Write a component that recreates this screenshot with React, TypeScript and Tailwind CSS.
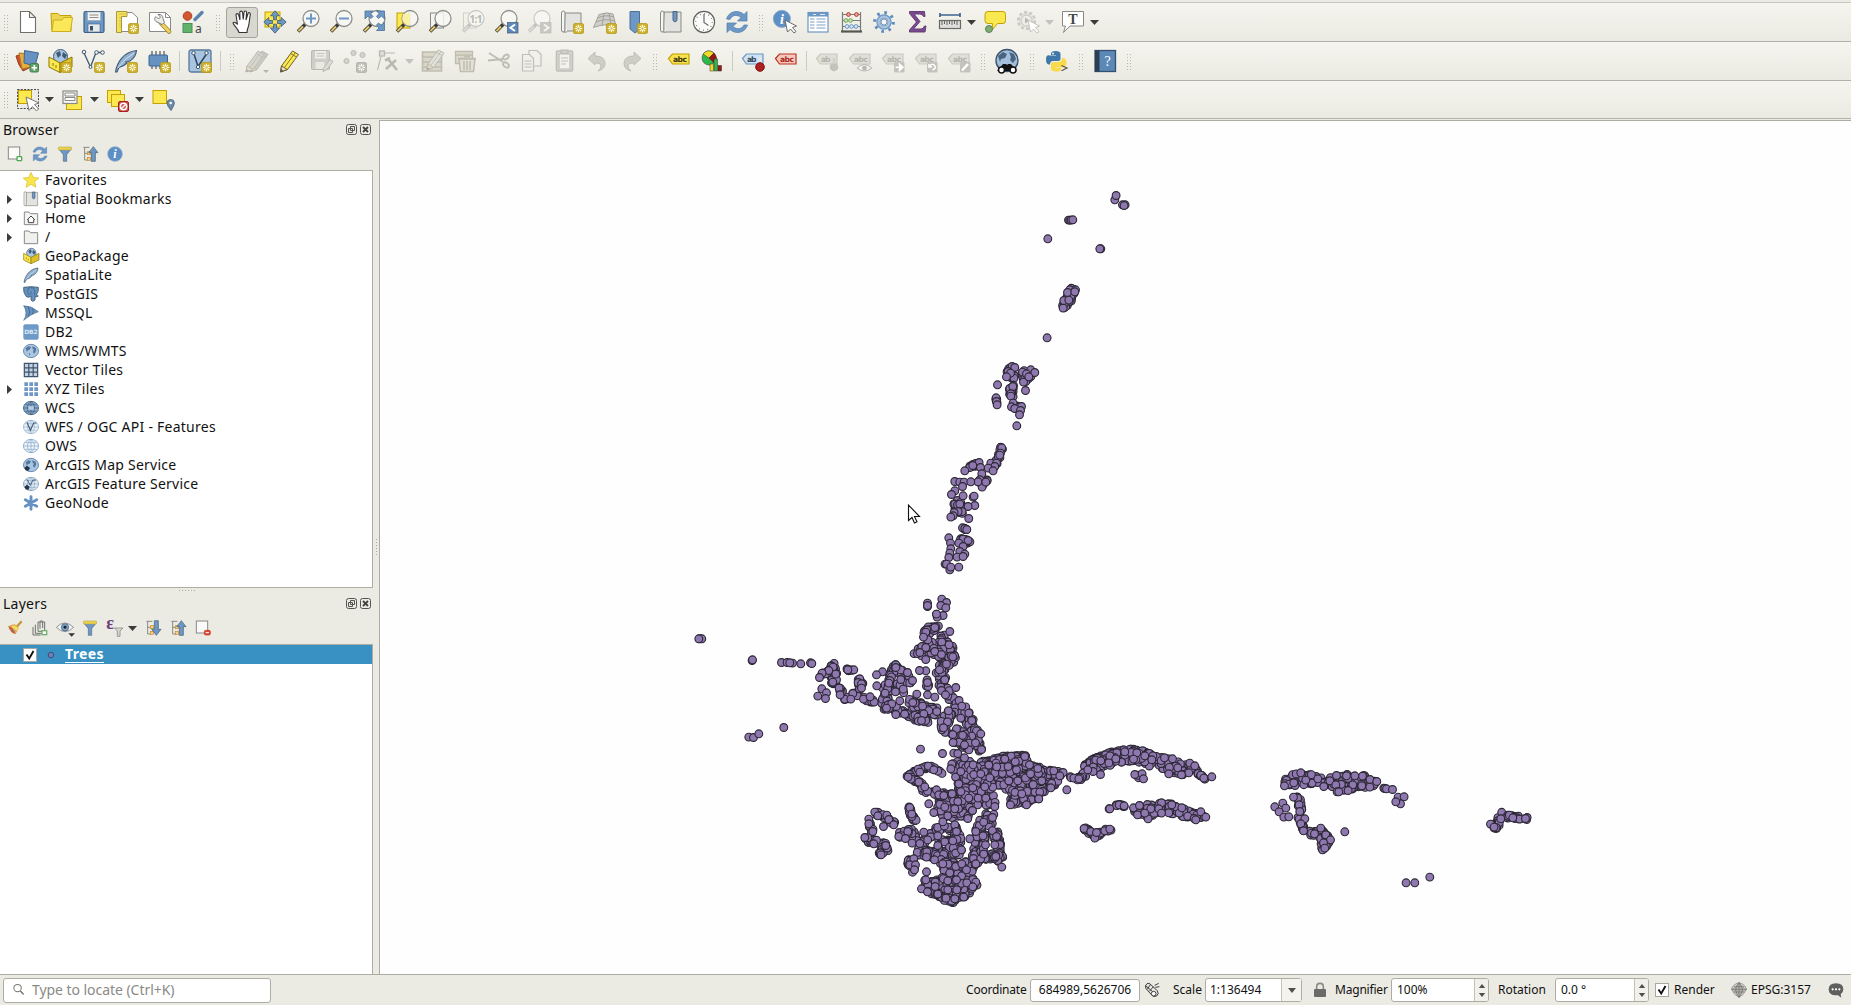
import React from "react";

/* ---------- shared icon parts (24 x 24 grid) ---------- */
const B = "#6d97c4";
const D = "#415a75";
const Y = "#fce94f";
const YS = "#c4a000";
const G = "#888a85";

const Star = ({ x = 13, y = 13, grey = false }: { x?: number; y?: number; grey?: boolean }) => (
  <g transform={`translate(${x} ${y})`}>
    <rect x=".5" y=".5" width="10" height="10" rx="1.5" fill={grey ? "#bdbdb7" : "#cdb02a"} stroke={grey ? "#b0b0aa" : "#b89b1e"} strokeWidth=".8" />
    <path d="M5.5 1.8v7.4M1.8 5.5h7.4M2.9 2.9l5.2 5.2M8.1 2.9L2.9 8.1" stroke="#fffdf0" strokeWidth="1.2" />
    <circle cx="5.5" cy="5.5" r="1.3" fill={grey ? "#bdbdb7" : "#d9c04a"} />
  </g>
);
const Mag = ({ grey = false }: { grey?: boolean }) => (
  <g>
    <path d="M9.5 14L2 21.5" stroke={grey ? "#c4c3bc" : "#3a3a38"} strokeWidth="3.6" />
    <path d="M7 16.5L2.4 21.1" stroke={grey ? "#dddcd4" : "#e8c865"} strokeWidth="2" />
    <circle cx="15" cy="8.5" r="8" fill="#f7f7f4" fillOpacity=".85" stroke={grey ? "#cbcac3" : "#8d8f8b"} strokeWidth="1.3" />
  </g>
);
const Globe = ({ fill = "#a9c6e2", line = D, land = false }: { fill?: string; line?: string; land?: boolean }) => (
  <g>
    <ellipse cx="12" cy="12" rx="11.3" ry="10" fill={fill} stroke={line} strokeWidth="1.2" />
    {land ? (
      <path d="M4 8l4-3 4 1-2 4-3 1-1 3zM14 5l5 2 1 4-3 5-2-2 1-4-2-2zM8.5 15l2.5 1-1 3.500z" fill={line} />
    ) : (
      <path d="M1 12h22M3.500 7h17M3.500 17h17M12 2v20M12 2c-7 5-7 15 0 20M12 2c7 5 7 15 0 20" fill="none" stroke={line} strokeWidth=".9" />
    )}
  </g>
);
const Feather = () => (
  <g>
    <path d="M1.500 23C3 14 9 3 22.500 1.500 22 7 19 10 16 12l-4 1 1 1c-3 3-6 4-8 4.500L3 23z" fill="#8fb0d0" stroke={D} strokeWidth="1.100" />
    <path d="M4 19Q9 11 20 4" fill="none" stroke="#dbe7f2" strokeWidth=".9" />
  </g>
);
const GeoBox = () => (
  <g>
    <circle cx="12.500" cy="7.500" r="7" fill="#a9c6e2" stroke={D} />
    <path d="M8 4l4-2 1 4-3 3zM15 3l4 3-2 4-3-3z" fill={D} />
    <path d="M1 8l11 6v9.500L1 18z" fill="#fce94f" stroke="#8c7400" />
    <path d="M24 8l-12 6v9.500L24 18z" fill="#dcc02c" stroke="#8c7400" />
    <path d="M5 14v3M8 16v3" stroke="#8c7400" />
  </g>
);
const Tag = ({ fill, stroke, text, label = "abc" }: { fill: string; stroke: string; text: string; label?: string }) => (
  <g>
    <path d="M1.500 9.500L5.500 5h16.500v10H5.500z" fill={fill} stroke={stroke} strokeWidth="1.200" />
    <text x="6" y="12.800" fontSize="7.600" fontWeight="700" fill={text} className="font-['DejaVu_Sans']" textLength={label.length > 2 ? 14 : 9.500}>{label}</text>
  </g>
);
const Refresh = () => (
  <g fill={B} stroke="#4d7fb0" strokeWidth=".7">
    <path d="M1.500 9C4 .5 14-.5 19 4.500l3-3v9.500h-9.500L16 7.500C12 4 7 5 5 9.500z" />
    <path d="M22.500 15C20 23.500 10 24.500 5 19.500l-3 3V13h9.500L8 16.500C12 20 17 19 19 15z" />
  </g>
);
const Cursor = ({ grey = false }: { grey?: boolean }) => (
  <path d="M12 10l2.500 12 3-3 3.500 4 2-1.500-3.500-4 4-1.500z" fill="#fff" stroke={grey ? "#c4c3bc" : "#6a6a6a"} strokeWidth="1" />
);
const Funnel = () => (
  <g>
    <path d="M3 5h18l-6.500 8v10h-5V13z" fill={B} stroke={D} strokeWidth=".8" />
    <rect x="2" y="1.500" width="20" height="4.500" rx="1.500" fill="#e9d34e" stroke="#b5a03a" strokeWidth=".8" />
  </g>
);
const TreeArrow = ({ up = false }: { up?: boolean }) => (
  <g>
    <path d="M2 2h9M4 2v19h5M4 11h5" fill="none" stroke={G} strokeWidth="1.500" />
    <rect x="8" y="8.500" width="4.500" height="4.500" fill="#f6d08a" stroke="#c98a1e" />
    <rect x="8" y="17" width="4.500" height="4.500" fill="#f6d08a" stroke="#c98a1e" />
    <path d={up ? "M17 1l7 9h-4v13h-6V10h-4z" : "M17 23l7-9h-4V1h-6v13h-4z"} fill={B} stroke={D} />
  </g>
);
const Info = () => (
  <g>
    <circle cx="12" cy="12" r="11" fill="#5d8fc4" stroke="#88a9cb" />
    <text x="12" y="18.500" fontSize="18" fontStyle="italic" fontWeight="700" fill="#fff" textAnchor="middle" className="font-['Liberation_Serif']">i</text>
  </g>
);
const ZF = "#d0cfc7";
const Pencil = ({ c = Y, s = "#6a6030", t = "#555" }: { c?: string; s?: string; t?: string }) => (
  <g>
    <path d="M3 17L14 2l6 3.500L9 20.500 2 23z" fill={c} stroke={s} strokeWidth="1" />
    <path d="M2 23l1-6 6 3.500z" fill="#e9dcc0" stroke={s} />
    <path d="M2 23l.5-3 2.500 2z" fill={t} />
    <path d="M12 4.500l6 3.500M6 18.500L16.500 4" stroke={s} strokeWidth=".8" />
  </g>
);

const icons: Record<string, React.ReactNode> = {
  file: <path d="M4.500 1.500h9l6 6v15h-15zM13.500 1.500v6h6" fill="#fff" stroke="#6e6e6c" strokeWidth="1.100" />,
  open: (
    <g>
      <path d="M2 3.500h7l2 2h11v16H3z" fill="#ecd551" stroke={YS} />
      <path d="M3 21.500L4.500 10H13l1.500-2.500h9L21.500 21.500z" fill="#fae75a" stroke="#cfae1c" />
    </g>
  ),
  save: (
    <g>
      <rect x="2" y="1.500" width="20" height="21" rx="1.500" fill={B} stroke="#3f5f86" strokeWidth="1.200" />
      <rect x="5.500" y="2" width="13" height="8.500" fill="#f4f4f0" stroke="#9aa7b5" strokeWidth=".6" />
      <path d="M7.500 5h9M7.500 7.500h9" stroke="#8c8c8a" />
      <rect x="6" y="14" width="12" height="8" fill="#e8eaea" stroke="#3f5f86" strokeWidth=".6" />
      <rect x="8" y="16" width="3" height="4.500" fill="#36506f" />
    </g>
  ),
  newLayout: (
    <g>
      <path d="M5 2.500h12l5.500 5v14H5z" fill="#fff" stroke={G} />
      <path d="M1.500 1.500H12v5H6.500v16h-5z" fill="#f5e05a" stroke="#a89a3c" />
      <path d="M4 4h7M4 8h2M4 11h2M4 14h2M4 17h2" stroke="#c4b04a" strokeWidth=".7" />
      <Star />
    </g>
  ),
  layouts: (
    <g>
      <path d="M1.500 2.500h16l5 5v14h-21z" fill="#fff" stroke={G} />
      <path d="M17.500 2.500v5h5" fill="none" stroke={G} />
      <path d="M13 13l8 8.500" stroke="#9c8438" strokeWidth="4.600" strokeLinecap="round" />
      <path d="M14 14l7 7.500" stroke="#f0d25c" strokeWidth="3" strokeLinecap="round" />
      <path d="M14 14.500L8 11.500c-2-2-1.500-4 0-5l2.500 2.500 2-2L10 4.500c3-.5 5 1 5 4l1.500 4z" fill="#ececea" stroke="#7d7f7b" />
    </g>
  ),
  style: (
    <g>
      <circle cx="6.500" cy="6" r="4.300" fill="#d4552f" stroke="#a8411f" />
      <path d="M14 9.500l7-7" stroke="#5b83b0" strokeWidth="3.400" strokeLinecap="round" />
      <rect x="2" y="13.500" width="9" height="9" fill="#5fb36b" stroke="#4d8f57" />
      <text x="14" y="22.500" fontSize="12" fill="#454545" className="font-['Noto_Sans']">a</text>
    </g>
  ),
  hand: (
    <path
      d="M7.500 22.500c-1-4-5-6.500-6-9.500 1-1.500 3-.5 4.500 1.500L4.500 5c0-1.800 2.300-1.800 2.700 0l1.300 5L8.300 2.500c0-1.800 2.600-1.800 2.800 0l.6 7 .9-7.500c.3-1.500 2.600-1.300 2.500.5L14.500 10l2-6.500c.5-1.500 2.500-.8 2.300.8-.8 4-.8 9-2 12.500-.8 2-1.300 3.500-1.300 5.700z"
      fill="#fff" stroke="#333" strokeWidth="1.100" transform="translate(1.500 0)"
    />
  ),
  panSel: (
    <g>
      <rect x="2" y="2" width="15" height="15" fill={Y} stroke={YS} />
      <path d="M12 .8l4.500 5h-3v4h-3v-4h-3zM12 23.200l4.500-5h-3v-4h-3v4h-3zM.8 12l5-4.500v3h3.700v3H5.800v3zM23.200 12l-5-4.500v3h-3.700v3h3.700v3z" fill={B} stroke={D} strokeWidth=".8" />
    </g>
  ),
  zoomIn: <g><Mag /><path d="M15 3.500v10M10 8.500h10" stroke={B} strokeWidth="2" /></g>,
  zoomOut: <g><Mag /><path d="M10 8.500h10" stroke={B} strokeWidth="2" /></g>,
  zoomFull: (
    <g>
      <Mag />
      <path d="M3 1h8L8.500 3.500l2.500 3-2 2-3-2.500L3 9zM22.500 1h-8L17 3.500l-2.500 3 2 2 3-2.500 3 3zM22.500 20.500h-8L17 18l-2.500-3 2-2 3 2.500 3-3z" fill={B} stroke="#4a709a" strokeWidth=".8" />
    </g>
  ),
  zoomSel: <g><rect x="2" y="3" width="13" height="15" fill={Y} stroke={YS} /><Mag /><path d="M8 4h7v11h-3q-4-2-5-6z" fill="#f8ef9c" opacity=".9" /></g>,
  zoomLayer: <g><rect x="2.500" y="3" width="13" height="15" fill="#f4f3ee" stroke={G} /><Mag /></g>,
  zoomNative: (
    <g>
      <rect x="2.500" y="3" width="13" height="15" fill="none" stroke={ZF} /><Mag grey />
      <text x="8.500" y="12.500" fontSize="10" fontWeight="700" fill="#b9b8b0" className="font-['Noto_Sans']" textLength="13">1:1</text>
    </g>
  ),
  zoomLast: <g><Mag /><rect x="13.500" y="12.500" width="10.500" height="10.500" fill="#5d89b8" stroke={D} strokeWidth=".7" /><path d="M21 14.500l-4.500 3.300L21 21" fill="none" stroke="#fff" strokeWidth="1.900" /></g>,
  zoomNext: <g><Mag grey /><rect x="13.500" y="12.500" width="10.500" height="10.500" fill="#c9c8c1" stroke="#bdbcb5" strokeWidth=".7" /><path d="M17 14.500l4.500 3.300L17 21" fill="none" stroke="#f5f4ee" strokeWidth="1.900" /></g>,
  newMap: (
    <g>
      <path d="M5 3h16v18H5z" fill="#e2e2df" stroke={G} />
      <path d="M5 3q0-2-1.700-2T1.500 3v17q0 2 1.800 2H7M5 3v17q0 2-1.700 2" fill="#f6f6f4" stroke={G} />
      <Star />
    </g>
  ),
  new3d: (
    <g>
      <path d="M6 4.500q8-3 14-.5l3 12q-11-3-22.500 1.500z" fill="#d0cfc9" stroke="#a3a29b" />
      <path d="M3 12q9-4 19-1M5 8q8-4 16-1M11 3.500L9 15.500M16 3l2 12" fill="none" stroke="#a3a29b" />
      <Star x={13} y={13} />
    </g>
  ),
  newBookmark: <g><path d="M4 1.500h9.500v18L9 23 4 19z" fill={B} stroke="#4b6f98" /><g transform="translate(-2)"><Star /></g></g>,
  bookmarks: (
    <g>
      <path d="M5 2h17v20H5z" fill="#e2e2df" stroke={G} />
      <path d="M5 3q0-2-1.700-2T1.500 3v17q0 2 1.800 2H7M5 3v17q0 2-1.700 2" fill="#f6f6f4" stroke={G} />
      <path d="M14 1.500h4v9l-2 1.500-2-1.500z" fill={B} stroke={D} strokeWidth=".9" />
    </g>
  ),
  clock: (
    <g>
      <circle cx="12" cy="12" r="10.600" fill="#fbfbfa" stroke="#5e605e" strokeWidth="1.100" />
      <circle cx="12" cy="12" r="8.300" fill="none" stroke="#777" strokeWidth="1.400" strokeDasharray=".8 3.546" />
      <path d="M12 4v8.500l4.500 3" fill="none" stroke="#6a6a68" strokeWidth="1.200" />
    </g>
  ),
  refresh: <Refresh />,
  identify: (
    <g>
      <g transform="translate(-.5 -.5) scale(.78)"><Info /></g>
      <Cursor />
    </g>
  ),
  table: (
    <g>
      <rect x="2" y="2.500" width="20" height="19.500" fill="#fff" stroke={B} strokeWidth="1.200" />
      <rect x="2" y="2.500" width="20" height="4" fill={B} />
      <path d="M7 4.500h3M14 4.500h5" stroke="#dce8f4" />
      <path d="M4 9h4.500M10.500 9h9M4 12h4.500M10.500 12h9M4 15h4.500M10.500 15h9M4 18h4.500M10.500 18h9" stroke="#7d9ec2" />
    </g>
  ),
  abacus: (
    <g>
      <path d="M3.500 2v19M21.500 2v19M3.500 4.500h18M3.500 10.500h18M3.500 16.500h18" stroke="#7a7a78" strokeWidth="1.200" fill="none" />
      <path d="M2 21.500h21" stroke="#555753" strokeWidth="2.200" />
      <g strokeWidth="1"><g fill="#e9a0a0" stroke="#c0392b"><circle cx="9.500" cy="4.500" r="1.900" /><circle cx="17.500" cy="4.500" r="1.900" /></g>
        <g fill="#bfe3a8" stroke="#7da766"><circle cx="7" cy="10.500" r="1.900" /><circle cx="11.500" cy="10.500" r="1.900" /></g>
        <g fill="#d5e6f5" stroke="#6d97c4"><circle cx="8" cy="16.500" r="1.900" /><circle cx="12.500" cy="16.500" r="1.900" /><circle cx="17" cy="16.500" r="1.900" /></g></g>
    </g>
  ),
  gear: (
    <g fill="none" stroke={B}>
      <circle cx="12" cy="12" r="9.300" strokeWidth="3.200" strokeDasharray="2.600 4.704" stroke="#5f8cbd" />
      <circle cx="12" cy="12" r="5.600" strokeWidth="4.200" />
      <circle cx="12" cy="12" r="5.400" strokeWidth="2.200" stroke="#a9c4e0" />
      <circle cx="12" cy="12" r="3" strokeWidth=".8" stroke="#5580ad" fill="#f5f4ee" />
    </g>
  ),
  sigma: <path d="M4.500 1.500h15l.5 5h-1.500Q17.500 4 15 4h-6l6 7.500L8.500 19H16q2.500 0 3.500-3H21l-1 6H4.500v-2l7-8-7-8.500z" fill="#7a4a94" stroke="#5c3566" strokeWidth=".9" />,
  measure: (
    <g>
      <path d="M2 5h20M2 3v4M22 3v4" stroke="#3f6492" strokeWidth="1.700" />
      <rect x="1.500" y="10.500" width="21" height="8" fill="#dedfdc" stroke="#686a67" strokeWidth="1.200" />
      <path d="M4 11v4M6.500 11v3M9 11v4M11.500 11v3M14 11v4M16.500 11v3M19 11v4" stroke="#555" strokeWidth=".9" />
    </g>
  ),
  tip: (
    <g>
      <path d="M5 1.500h15q2.500 0 2.500 3v6q0 3-2.500 3h-5.500L9 20l.5-6.500H5q-3 0-3-3v-6q0-3 3-3z" fill="#f9e84f" stroke={YS} />
      <circle cx="6" cy="19" r="3.500" fill="#7fae74" stroke="#5b8253" />
    </g>
  ),
  action: (
    <g>
      <circle cx="10.500" cy="10.500" r="8.300" fill="#e6e5de" stroke="#cbcac2" strokeWidth="2.600" strokeDasharray="3 2.200" />
      <circle cx="10.500" cy="10.500" r="5.500" fill="#eeede7" stroke="#c3c2ba" /><path d="M9 7.500l4.500 3-4.500 3z" fill="#b9b8b0" />
      <Cursor grey />
    </g>
  ),
  textNote: (
    <g>
      <path d="M1.500 1.500h21v14.500H9L2.500 22.500 4.500 16h-3z" fill="#fff" stroke={G} />
      <text x="12" y="13.500" fontSize="14" fontWeight="700" fill="#444" textAnchor="middle" className="font-['Liberation_Serif']">T</text>
    </g>
  ),
  /* second row */
  source: (
    <g>
      <path d="M1 7l9-3 6 14-8 4q-5-6-7-15z" fill="#c9512f" stroke="#9d3c20" />
      <path d="M4 4l11 1 1 13-9 2z" fill="#e8ab3c" stroke="#b17b1c" />
      <path d="M9.500 1.500L23.500 4 20 17l-11-3z" fill="#6592c0" stroke="#3f6492" />
      <rect x="15" y="14.500" width="8.500" height="8.500" rx="1.500" fill="#5fa368" stroke="#477a4f" /><path d="M19.300 16v5.500M16.500 18.800H22" stroke="#fff" strokeWidth="1.600" />
    </g>
  ),
  geopkg: <g><GeoBox /><Star /></g>,
  vshape: (
    <g>
      <path d="M3 4l6.500 14L15 3.500h6" fill="none" stroke={D} strokeWidth="1.300" />
      <g fill="#f5f4ee" stroke={D} strokeWidth="1"><circle cx="3" cy="3" r="1.800" /><circle cx="15.500" cy="3.500" r="1.800" /><circle cx="21.500" cy="3.500" r="1.800" /><circle cx="9.500" cy="18" r="1.500" /></g>
      <Star />
    </g>
  ),
  feather: <g><Feather /><Star /></g>,
  memory: (
    <g>
      <path d="M5 2v18M9 2v18M13 2v18M17 2v18" stroke="#555753" strokeWidth="1.200" />
      <rect x="2" y="6" width="18.500" height="11" rx="1" fill="#6592c0" stroke="#3f6492" />
      <Star />
    </g>
  ),
  virtual: (
    <g>
      <rect x="1" y="1" width="22" height="22" rx="2" fill="#a8c4df" stroke="#57789c" strokeWidth="1.300" />
      <path d="M6 5l4 12.500L18.500 5" fill="none" stroke="#2f4560" strokeWidth="1.500" />
      <g fill="#fff" stroke={D}><circle cx="5.500" cy="4" r="1.700" /><circle cx="10" cy="18" r="1.700" /><circle cx="18.500" cy="4" r="1.700" /></g>
      <Star />
    </g>
  ),
  edits: (
    <g>
      <g transform="translate(4 0)"><Pencil c="#cbcac2" s="#bdbcb4" t="#aaa" /></g><Pencil c="#d6d5cd" s="#bdbcb4" t="#aaa" />
      <path d="M19 21h6l-3 3z" fill="#b5b4ac" />
    </g>
  ),
  pencil: <g transform="translate(1.500 0)"><Pencil /></g>,
  saveEdits: (
    <g>
      <rect x="1.500" y="1.500" width="18" height="19" rx="1" fill="#cfcec6" stroke="#b9b8b0" />
      <rect x="5" y="2" width="11" height="7.500" fill="#efeee8" /><path d="M6.500 4.500h8M6.500 7h8" stroke="#c4c3bb" />
      <rect x="5.500" y="13" width="9" height="7" fill="#e9e8e1" />
      <path d="M13 22.500l1-4 6-8 3 2-6 8z" fill="#dddcd4" stroke="#b9b8b0" />
    </g>
  ),
  addPoints: (
    <g>
      <g fill="#d4d3cb" stroke="#bebdb5"><circle cx="10.500" cy="4" r="2.600" /><circle cx="19.500" cy="6" r="2.600" /><circle cx="3.500" cy="12" r="2.600" /></g>
      <Star grey />
    </g>
  ),
  vertex: (
    <g stroke="#bab9b1" fill="none">
      <rect x="3.500" y="2" width="5" height="5" fill="#e0dfd8" strokeWidth="1.300" /><path d="M9 4h10M5 7.500L1.500 21" strokeWidth="1.100" />
      <path d="M10 20l10-9M12 10l9 11" strokeWidth="2.600" /><path d="M9 11.500l5-2.500" strokeWidth="2.600" />
    </g>
  ),
  modify: (
    <g>
      <path d="M1.500 3h19v19h-19zM1.500 8h19M1.500 13h19M1.500 18h19" fill="#dad7c8" stroke="#bfbdb2" strokeWidth="1.600" />
      <g transform="translate(4 -1) scale(.95)"><Pencil c="#e2e1d9" s="#b9b8b0" t="#aaa" /></g>
    </g>
  ),
  trash: (
    <g stroke="#bfbcb1">
      <path d="M1.500 2.500h17v12h-17zM1.500 6h17" fill="#ddd9ca" strokeWidth="1.300" />
      <path d="M5 10h16l-1.500 12.500h-13z" fill="#e3e0d4" strokeWidth="1.500" /><path d="M10 12v9M13 12v9M16 12v9M4 9.500h18M10 7.500h6" strokeWidth="1.500" />
    </g>
  ),
  cut: (
    <g fill="none" stroke="#bfbeb6" strokeWidth="1.900">
      <path d="M2 4l14 9M1 11.500l15-1.500" /><ellipse cx="19" cy="8" rx="3" ry="2" transform="rotate(-35 19 8)" /><ellipse cx="19" cy="16" rx="3.200" ry="2.200" transform="rotate(35 19 16)" />
    </g>
  ),
  copy: (
    <g fill="#f1f0ea" stroke="#bfbeb6" strokeWidth="1.200">
      <path d="M9 1.500h8l4 4V17H9z" /><path d="M2.500 5.500h7l4 4v12.500h-11z" /><path d="M4.500 12h7M4.500 15h7M4.500 18h7" />
    </g>
  ),
  paste: (
    <g stroke="#bfbeb6" strokeWidth="1.200">
      <rect x="3.500" y="2" width="16" height="20" rx="1" fill="#dddcd4" strokeWidth="1.600" /><path d="M6 5h11v15H6z" fill="#f3f2ec" /><path d="M8 1h7v3.500H8z" fill="#cfcec6" /><path d="M8 9h7M8 12h7M8 15h5" />
    </g>
  ),
  undo: <path d="M2 9.500L9 3v4q10 0 10 7.500 0 5.500-7 7.500 3-2.500 3-5 0-3-6-3V16z" fill="#cfcec6" stroke="#bfbeb6" />,
  redo: <path d="M22 9.500L15 3v4Q5 7 5 14.500 5 20 12 22q-3-2.500-3-5 0-3 6-3V16z" fill="#cfcec6" stroke="#bfbeb6" />,
  abc: <Tag fill="#f7e34d" stroke={YS} text="#3a3514" />,
  diagram: (
    <g stroke="#333" strokeWidth=".5">
      <circle cx="9" cy="9" r="7" fill="#2eb84a" /><path d="M9 9L3 5q5-6 11-1z" fill="#f2d923" /><path d="M9 9l5-5q5 6 0 10z" fill="#9c1515" />
      <rect x="10" y="15" width="3.500" height="7" fill="#f2d923" /><rect x="14" y="10" width="3.500" height="12" fill="#2eb84a" /><rect x="18" y="16.500" width="3.500" height="5.500" fill="#9c1515" />
    </g>
  ),
  abPin: (
    <g><Tag fill="#cfe3f5" stroke={B} text="#34475c" label="ab" /><path d="M19 9v6" stroke="#e8e8e8" strokeWidth="2.500" /><circle cx="19" cy="18" r="4.300" fill="#b02020" stroke="#7d1212" /></g>
  ),
  abcRed: <Tag fill="#f3c9c0" stroke="#c03020" text="#b02a1a" />,
  abg1: <g><Tag fill="#e0dfd8" stroke="#cac9c1" text="#b5b4ac" label="ab" /><circle cx="19" cy="18" r="4.300" fill="#c4c3bb" /><path d="M19 9v6" stroke="#d2d1c9" strokeWidth="2.500" /></g>,
  abg2: <g><Tag fill="#e0dfd8" stroke="#cac9c1" text="#b5b4ac" /><path d="M9 19q7-7 15 0-8 6-15 0z" fill="#f2f1eb" stroke="#b8b7af" /><circle cx="16.500" cy="19" r="2.300" fill="#b8b7af" /></g>,
  abg3: <g><Tag fill="#e0dfd8" stroke="#cac9c1" text="#b5b4ac" /><rect x="13" y="13" width="10.500" height="10.500" rx="1.500" fill="#c4c3bb" /><path d="M14.500 18.300h5M18.500 15l3.500 3.300-3.500 3.300z" stroke="#fff" fill="#fff" strokeWidth="1.500" /></g>,
  abg4: <g><Tag fill="#e0dfd8" stroke="#cac9c1" text="#b5b4ac" /><rect x="13" y="13" width="10.500" height="10.500" rx="1.500" fill="#c4c3bb" /><path d="M16 17q2-3 4.500-.5t-2 4.500M15 15v3h3" stroke="#fff" fill="none" strokeWidth="1.500" /></g>,
  abg5: <g><Tag fill="#e0dfd8" stroke="#cac9c1" text="#b5b4ac" /><rect x="13" y="13" width="10.500" height="10.500" rx="1.500" fill="#c4c3bb" /><path d="M15 21.500l6-6.500" stroke="#fff" strokeWidth="2.500" /></g>,
  metasearch: (
    <g>
      <circle cx="12" cy="11.500" r="11" fill="#a3bfdb" stroke="#3c536e" strokeWidth="1.400" />
      <path d="M3 7l5-4 4 2-2 4-4 1-1 3zM14 3l5 2 2 5-3 4-3-3 1-3z" fill="#4a6480" />
      <path d="M8 15h3l1 1 1-1h3l6 7H2z" fill="#111" /><circle cx="6.500" cy="21" r="3" fill="#fff" stroke="#111" strokeWidth="1.500" /><circle cx="18" cy="21" r="3" fill="#fff" stroke="#111" strokeWidth="1.500" />
    </g>
  ),
  python: (
    <g>
      <path d="M10.500 2q5 0 5 3v5q0 2-2.500 2H8q-3 0-3 3.500-4 .5-4-5T5 6.500h6V6H6V4.500q0-2.500 4.500-2.500z" fill="#3f78a8" />
      <path d="M11 22.500q-5 0-5-3v-4Q6 13 8.500 13h5Q17 13 17 9q4.500 0 4.500 4.500 0 5-4 5H11v.5h5v1.500q0 2-5 2z" fill="#f8da4b" />
      <circle cx="8" cy="4.500" r=".9" fill="#fff" /><path d="M16.500 16.500l5.500 2.500-5.500 2.700" fill="none" stroke="#555" strokeWidth="1.200" />
    </g>
  ),
  help: (
    <g>
      <rect x="2" y="1.500" width="20.500" height="21" fill="#5c88b8" stroke="#34506f" strokeWidth="1.300" /><rect x="2" y="1.500" width="4.500" height="21" fill="#2d3e52" />
      <text x="14.500" y="17" fontSize="14" fill="#fff" textAnchor="middle" className="font-['Liberation_Serif']">?</text>
    </g>
  ),
  /* third row */
  select: (
    <g>
      <rect x="1.500" y="1.500" width="21" height="19" fill="#ececea" stroke="#444" strokeDasharray="2 1.300" />
      <rect x="2.500" y="2.500" width="13" height="13" fill={Y} stroke={YS} />
      <path d="M10 9l3 13.500 3.500-4 4 4.500 2-2-4-4.500 4.500-1.500z" fill="#fff" stroke="#777" />
    </g>
  ),
  selectForm: (
    <g>
      <rect x="5.500" y="8.500" width="15" height="13" fill={Y} stroke={YS} />
      <rect x="2" y="3" width="14" height="12.500" fill="#f6f6f4" stroke={G} strokeWidth="1.200" /><path d="M4 5h10v3H4zM4 9.500h10v3H4z" fill="#fff" stroke={G} />
    </g>
  ),
  deselect: (
    <g>
      <rect x="1.500" y="2.500" width="13" height="12" fill={Y} stroke={YS} /><rect x="5.500" y="6.500" width="13" height="12" fill={Y} stroke={YS} />
      <rect x="12.500" y="13.500" width="10" height="10" rx="1.500" fill="#d24a4a" stroke="#a32020" /><circle cx="17.500" cy="18.500" r="3.200" fill="none" stroke="#fff" strokeWidth="1.500" /><path d="M15 21l5-5" stroke="#fff" strokeWidth="1.500" />
    </g>
  ),
  selLoc: (
    <g>
      <rect x="2" y="2.500" width="13.500" height="13" fill={Y} stroke={YS} />
      <path d="M20 22.500q-4-5-4-7.500 0-3.500 3.700-3.500T23.300 15q0 2.500-3.300 7.500z" fill="#6e8ca8" stroke="#50708e" /><circle cx="19.700" cy="15" r="1.300" fill="#fff" />
    </g>
  ),
  /* panel icons */
  addLayer: <g><rect x="2" y="1.500" width="17" height="18" fill="#fafaf8" stroke={G} strokeWidth="1.500" /><rect x="15" y="16" width="7" height="6" rx="1" fill="#fff" stroke="#4fa84f" strokeWidth="2" /></g>,
  removeLayer: <g><rect x="2" y="1.500" width="17" height="18" fill="#fafaf8" stroke={G} strokeWidth="1.500" /><rect x="14" y="15.500" width="9" height="7" rx="2" fill="#e0452f" stroke="#c43320" /><path d="M16 19h5" stroke="#fff" strokeWidth="1.600" /></g>,
  funnel: <Funnel />,
  collapse: <TreeArrow up />,
  expand: <TreeArrow />,
  info: <Info />,
  brush: (
    <g>
      <path d="M14 11l7-8" stroke="#c8963a" strokeWidth="3.500" strokeLinecap="round" /><path d="M2 9l9-3 7 6-5 9q-8-3-11-12z" fill="#e3ab52" /><path d="M9 8l9 4-3 4-8-5z" fill="#f4dc5c" /><path d="M2 9l6 3 5 9q-8-1-11-12z" fill="#cf5b37" /><path d="M6 14l4 1 2 4z" fill="#5a82b0" />
    </g>
  ),
  group: <g fill="none" stroke="#70726e" strokeWidth="1.500"><path d="M9 3h10v14H9zM5 7v13h11M1.500 10.500v12H13M12 13V4q0-3 2-3t2 3v8" /><rect x="15" y="16" width="7" height="6" fill="#fff" stroke="#6fb26f" strokeWidth="2" /></g>,
  eye: <g><path d="M-1 11q12-13 26 0-13 13-26 0z" fill="#f2f4f5" stroke="#8a8d90" strokeWidth="1.400" /><circle cx="12" cy="11" r="5.500" fill="#7aa0c4" stroke={D} /><circle cx="12" cy="11" r="2.200" fill="#222" /><path d="M17 20h10l-5 5z" fill="#333" /></g>,
  epsilon: <g><text x="-1" y="14" fontSize="27" fill="#6c4080" fontWeight="600" className="font-['Liberation_Serif']">ε</text><path d="M11 12h13l-4.500 4.500v8h-4v-8z" fill="#d6d6d2" stroke={G} strokeWidth="1.200" /></g>,
  /* tree icons */
  fav: <path d="M12 .5l3.400 7.800 8.300.7-6.300 5.500 2 8.500-7.400-4.500L4.600 23l2-8.500L.3 9l8.300-.7z" fill="#f9e64f" stroke="#d8b81c" />,
  home: <g><path d="M2 3h7l2 2.500h11V22H2z" fill="#f4f4f2" stroke={G} strokeWidth="1.500" /><path d="M6.500 14.500L12 9l5.500 5.500H16V19H8v-4.500z" fill="#fff" stroke="#444" strokeWidth="1.500" /></g>,
  folder: <path d="M2 3h7l2 2.500h11V22H2z" fill="#f0f0ee" stroke={G} strokeWidth="1.500" />,
  box: <GeoBox />,
  quill: <Feather />,
  elephant: <g><path d="M1 2q11-2 22 0 1 6-3 12l3 1q-3 2-5 1v5q-4 4-6 0v-6q-3 3-7 1Q0 10 1 2z" fill="#6592c0" stroke={D} strokeWidth="1.300" /><path d="M8 3q-3 7 1 11M16 3q3 6 1 11M8 3q4-1 8 0M12 8v5" stroke={D} fill="none" /></g>,
  mssql: <g><path d="M1 1q12 0 22 9-12 4-22 13 7-11 0-22z" fill="#6592c0" stroke={D} strokeWidth=".8" /><path d="M8 2.500q4 8 0 15M14 5q3 5 0 9" stroke="#3f6492" fill="none" strokeWidth="1.300" /></g>,
  db2: <g><rect x=".5" y=".5" width="23" height="23" rx="3" fill="#6d9ac6" /><text x="12" y="14.500" fontSize="9" fontWeight="700" fill="#dbe8f4" textAnchor="middle" textLength="20" className="font-['DejaVu_Sans']">DB2</text></g>,
  wms: <Globe land line="#56779a" />,
  vtiles: <g><rect x="2" y="2" width="20" height="20" fill="#c3d2e2" /><path d="M2 2h20v20H2zM2 8.700h20M2 15.300h20M8.700 2v20M15.300 2v20" fill="none" stroke="#40546c" strokeWidth="1.800" /></g>,
  xyz: <path d="M2 2h5.500v5.500H2zM9.500 2H15v5.500H9.500zM17 2h5.500v5.500H17zM2 9.500h5.500V15H2zM9.500 9.500H15V15H9.500zM17 9.500h5.500V15H17zM2 17h5.500v5.500H2zM9.500 17H15v5.500H9.500zM17 17h5.500v5.500H17z" fill="#6d97c4" />,
  wcs: <g><Globe fill="#86a9cc" line="#3b5673" /><path d="M8 9.500h8v5H8z" fill="#b9d0e6" /></g>,
  wfs: <g><Globe fill="#e8f0f7" line="#8fb0cf" /><path d="M6 5l5 12 5-11h4" fill="none" stroke={D} strokeWidth="1.700" /></g>,
  ows: <Globe fill="#eef4fa" line="#7ba0c4" />,
  arcmap: <g><Globe land line="#56779a" /><path d="M2 16l4-3 4 3-2 5-4-1z" fill="#26364a" /></g>,
  arcfeat: <g><Globe fill="#e4edf6" line="#7d9dbd" /><path d="M6 5l5 9 4-8h4" fill="none" stroke={D} strokeWidth="1.500" /><path d="M2 16l4-3 4 3-2 5-4-1z" fill="#26364a" /></g>,
  geonode: <g stroke="#6592c0" strokeWidth="4.400" strokeLinecap="round"><path d="M12 2.500v19M3.500 7l17 10M20.500 7l-17 10" /></g>,
  crs: <g><path d="M12 1l11 10-11 12L1 11z" fill="#b4b3ad" /><path d="M0 11h24M4 7h16M4 15h16M12 1v22M12 1q-10 10 0 22M12 1q10 10 0 22M12 1Q2 4 1 11q4 9 11 12 7-3 11-12-1-7-11-10" fill="none" stroke="#73736f" strokeWidth="1.100" /></g>,
  extents: <g stroke="#333" fill="#e8e7e0" strokeWidth="1.400"><path d="M2 6q2-5 6-4l12 11q3 5-1 8-4 2-7-1L3 10z" /><path d="M5 11L10 3M8 14l6-7M3 6l14 12" /><circle cx="14.500" cy="17.500" r="3.500" fill="#fff" /><path d="M16 5l6-3M17 8l6-1" /></g>,
  lock: <g><path d="M7 12V7q0-5 5-5t5 5v5" fill="none" stroke="#8a8a88" strokeWidth="2.400" /><rect x="3" y="10.500" width="18" height="12" rx="1.500" fill="#6a6a68" /></g>,
  bubble: <g><path d="M12 2q11 0 11 9 0 5-4 7.500l1 5-5-3.500h-3q-11 0-11-9t11-9z" fill="#5f5f5d" /><g fill="#fff"><circle cx="7" cy="11" r="1.700" /><circle cx="12" cy="11" r="1.700" /><circle cx="17" cy="11" r="1.700" /></g></g>,
};

const Ico = ({ n, cls = "size-6" }: { n: string; cls?: string }) => (
  <svg viewBox="0 0 24 24" className={`shrink-0 overflow-visible ${cls}`}>{icons[n]}</svg>
);

/* ---------- toolbars ---------- */
const Handle = ({ w = "w-[15px]" }: { w?: string }) => (
  <div className={`flex shrink-0 items-center justify-center ${w}`}>
    <div className="h-[17px] w-[5px] bg-[radial-gradient(circle,#b7b6ae_0.7px,transparent_0.9px)] bg-[size:3px_3px]" />
  </div>
);
const Sep = () => (
  <div className="flex w-2 shrink-0 justify-center"><div className="h-5 w-px bg-[#cbcac2]" /></div>
);
const Arrow = ({ off = false }: { off?: boolean }) => (
  <div className="flex w-3 shrink-0 items-center pl-px">
    <svg viewBox="0 0 9 5" className="h-[5px] w-[9px]"><path d="M0 0h9L4.500 5z" fill={off ? "#c4c3bb" : "#3c3c3a"} /></svg>
  </div>
);
const Bar = ({ items, lead = "w-[11px]", h = "h-[39px]" }: { items: string; lead?: string; h?: string }) => (
  <div className={`flex shrink-0 items-center border-b border-[#b2b1a8] bg-linear-to-b from-[#f5f4ee] to-[#ebeae2] ${h}`}>
    <Handle w={lead} />
    {items.split(" ").map((k, i) => {
      if (k === "|") return <Sep key={i} />;
      if (k === ":") return <Handle key={i} />;
      if (k === ":.") return <Handle key={i} w="w-4" />;
      if (k === "::") return <Handle key={i} w="w-[17px]" />;
      if (k === "v") return <Arrow key={i} />;
      if (k === "-v") return <Arrow key={i} off />;
      if (k === "hand")
        return (
          <div key={i} className="ml-px flex h-[31px] w-[32px] shrink-0 items-center justify-center rounded-[3px] border border-[#a5a49c] bg-[#d8d7d0]">
            <Ico n={k} />
          </div>
        );
      return <div key={i} className="flex w-[33px] shrink-0 justify-center"><Ico n={k} cls="size-6" /></div>;
    })}
  </div>
);

/* ---------- dock panels ---------- */
const DockTitle = ({ title }: { title: string }) => (
  <div className="flex h-[22px] shrink-0 items-center pl-[3px] pr-[2px] pb-px">
    <span className="grow text-[14px] leading-none tracking-[0.25px]">{title}</span>
    <div className="flex gap-[3px]">
      <svg viewBox="0 0 11 11" className="size-[11px]"><rect x=".5" y=".5" width="10" height="10" rx="2" fill="none" stroke="#55554f" /><path d="M4.500 2.500h4v4h-4zM2.500 4.500h4v4h-4z" fill="#ebeae3" stroke="#55554f" /></svg>
      <svg viewBox="0 0 11 11" className="size-[11px]"><rect x=".5" y=".5" width="10" height="10" rx="2" fill="none" stroke="#55554f" /><path d="M3 3l5 5M8 3L3 8" stroke="#44443f" strokeWidth="1.800" /></svg>
    </div>
  </div>
);

const tree: [string, string, boolean?][] = [
  ["fav", "Favorites"], ["bookmarks", "Spatial Bookmarks", true], ["home", "Home", true], ["folder", "/", true],
  ["box", "GeoPackage"], ["quill", "SpatiaLite"], ["elephant", "PostGIS"], ["mssql", "MSSQL"], ["db2", "DB2"],
  ["wms", "WMS/WMTS"], ["vtiles", "Vector Tiles"], ["xyz", "XYZ Tiles", true], ["wcs", "WCS"],
  ["wfs", "WFS / OGC API - Features"], ["ows", "OWS"], ["arcmap", "ArcGIS Map Service"],
  ["arcfeat", "ArcGIS Feature Service"], ["geonode", "GeoNode"],
];

/* ---------- tree point layer ---------- */
type P = [number, number];
const pts = (s: string): P[] => s.trim().split(/\s+/).map((p) => p.split(",").map(Number) as P);

let seed = 20231;
const rnd = () => {
  seed = (seed * 1664525 + 1013904223) % 4294967296;
  return seed / 4294967296;
};
const along = (s: string, spread: number, n: number): P[] => {
  const l = pts(s);
  return Array.from({ length: n }, () => {
    const t = rnd() * (l.length - 1);
    const i = Math.min(Math.floor(t), l.length - 2);
    const f = t - i;
    return [
      l[i][0] + (l[i + 1][0] - l[i][0]) * f + (rnd() * 2 - 1) * spread,
      l[i][1] + (l[i + 1][1] - l[i][1]) * f + (rnd() * 2 - 1) * spread,
    ] as P;
  });
};
const within = (s: string, n: number): P[] => {
  const l = pts(s);
  const xs = l.map((p) => p[0]);
  const ys = l.map((p) => p[1]);
  const x0 = Math.min(...xs), x1 = Math.max(...xs), y0 = Math.min(...ys), y1 = Math.max(...ys);
  const out: P[] = [];
  while (out.length < n) {
    const x = x0 + rnd() * (x1 - x0), y = y0 + rnd() * (y1 - y0);
    let inside = false;
    for (let i = 0, j = l.length - 1; i < l.length; j = i++) {
      if (l[i][1] > y !== l[j][1] > y && x < ((l[j][0] - l[i][0]) * (y - l[i][1])) / (l[j][1] - l[i][1]) + l[i][0]) inside = !inside;
    }
    if (inside) out.push([x, y]);
  }
  return out;
};

const north: P[] = [
  ...along("518,360 508,385 494,410", 8, 50), ...along("337,592 325,612 340,620", 6, 18), ...along("368,607 378,630 395,608", 7, 22),
  ...along("335,650 335,680", 6, 12), ...along("340,710 362,715", 5, 10), ...along("289,684 291,704", 2, 6), ...along("305,836 285,890", 5, 12),
  ...along("205,893 240,882", 5, 14), ...along("238,935 260,935", 6, 22), ...along("172,995 178,1025", 11, 22), ...along("183,1112 205,1115", 6, 20), ...along("188,1074 201,1079", 2, 5),
  ...pts(`645,90 649,77 668,105 676,105 673,107 506,151 510,151 514,151 519,150 444,207 603,237 600,237 510,360 527,360 503,368 525,366 490,415 492,392 507,391 442,504
  337,590 345,593 325,605 332,610 320,621 393,600 405,608 368,607 380,612 378,635 371,637 387,621 293,645 377,662 330,656 339,650 333,672 333,679 289,684 290,695 292,705 340,700 365,710 335,711 345,716 362,722 359,735 351,768
  306,838 306,834 302,850 300,856 273,880 290,880 285,890 265,895 280,903 238,878 210,893 219,887 195,903 242,893 246,912 240,930 250,945 247,952 262,933 235,936 258,937 165,935 180,937 193,937 213,936 188,950 165,963 155,974 190,978 220,982 223,979 165,1003 173,1005 180,1003 225,1007 205,1010 187,1025 175,1025 163,1028 160,1038 153,1042 207,1046 188,1074 195,1076 201,1079
  147,1104 152,1120 153,1137 150,1150 190,1108 205,1112 177,1120 190,1130 180,1145 195,1153 172,1162 190,1160 147,1163 136,1183 140,1183 150,1200 153,1192 177,1192`),
];
const center: P[] = [
  ...along("735,165 748,148 772,142", 7, 32), ...along("780,175 808,190 818,235 790,260 778,275 795,330 835,375", 12, 85),
  ...along("712,218 740,208 790,220", 12, 30), ...along("740,175 760,210", 10, 8), ...along("743,300 743,320", 4, 6),
  ...along("835,375 872,430 898,510", 14, 55), ...along("815,395 785,450", 15, 30), ...along("830,450 860,500", 18, 34),
  ...along("648,258 620,310 616,375", 13, 40), ...along("650,260 685,300 650,335", 13, 32), ...along("620,380 690,405 742,425", 9, 80), ...along("690,370 765,395", 13, 55),
  ...along("460,260 462,310", 10, 40), ...along("425,285 455,270", 5, 10), ...along("500,270 525,270", 3, 8), ...along("542,300 540,340 495,357", 8, 18), ...along("550,355 585,365", 5, 10), ...along("480,325 485,345", 5, 6),
  ...along("905,550 970,532 1040,530", 4, 60),
  ...within("905,550 970,530 1035,528 1050,555 1110,565 1150,580 1135,610 1100,630 1075,660 1030,680 990,673 995,640 960,618 900,620", 400),
  ...within("815,550 855,535 905,555 935,600 945,640 948,680 930,690 890,675 870,712 800,718 750,675 765,640 830,635 835,600 810,580", 230),
  ...along("682,592 715,572 745,560 800,585", 4, 50), ...along("685,592 715,608 740,635 780,645", 6, 40),
  ...along("650,768 690,755 720,790 760,762", 9, 44), ...along("765,748 830,745 835,785 775,785", 9, 48), ...along("720,820 770,825 840,810", 13, 52),
  ...along("690,840 702,870", 8, 12), ...along("790,845 810,870 850,855", 14, 55), ...within("725,900 780,895 830,875 890,900 895,925 850,955 820,968 790,958 740,937", 140),
  ...along("760,935 790,955 825,965", 5, 28), ...along("935,710 905,740 900,800 885,860", 16, 85), ...along("945,750 955,800 962,850", 9, 40), ...along("900,830 950,830", 10, 20),
  ...along("580,700 620,710 645,735", 7, 14), ...along("568,720 570,740 580,755", 4, 8), ...along("555,773 590,790 622,797 602,825", 8, 40), ...along("688,682 695,705 708,725", 4, 26),
  ...pts(`60,177 66,177 57,177 217,242 218,240 305,248 338,250 322,248 330,249 363,252 392,249 396,251 743,70 743,80 743,77 786,58 800,68 783,77 798,84 770,103 790,107 772,112 770,103 810,155 765,143 738,157 731,172 808,195 738,203 765,215 785,224 720,218 819,231 738,239 800,253 738,273 719,272 779,270 795,300 828,323 785,332 743,308 743,345 765,352 711,343 797,345 838,362 846,379 867,400 806,393 843,415 876,422 771,395 803,426 791,444 830,447 903,462 887,489 854,495 820,488 819,464 905,509 822,520 834,521 722,508 788,521 854,534
  648,255 648,263 608,276 590,285 683,278 663,299 698,302 591,318 627,310 647,336 616,340 660,363 636,372 699,368 620,385 648,404 732,402 725,422
  460,262 447,272 427,280 419,293 468,283 522,270 504,270 459,307 540,297 535,308 545,312 478,325 426,327 440,339 414,349 437,356 519,341 495,358 513,358 551,358 583,367 571,351 545,325 481,345
  312,443 207,472 221,473 237,462 720,577 762,570 717,607 735,621 685,592 816,553 843,575 813,567 880,555 927,554 974,537 985,560 1010,570 882,584 903,582 930,594 987,603 837,612 879,624 915,621 770,630 777,645 792,647 817,642 867,655 895,655 918,655 834,665 747,672 795,682 825,687 762,698 945,680 804,708 878,692 864,716 789,726 938,713 690,683 696,703 825,735
  585,697 594,708 567,718 567,732 627,719 611,740 642,735 579,755 555,773 582,792 618,797 604,825 684,755 657,770 677,776 732,757 697,790 720,791 774,768 830,755 819,783 774,797 845,810 910,768 888,755 870,777 950,770 917,795 945,795 966,862 948,830 789,852 828,860 846,852 888,852 764,840 740,832 702,837 690,855 707,855 704,870 740,876 738,900 860,870 810,879 804,903 830,900 766,920 861,909 888,907 879,921 804,930 831,930 725,927 743,936 852,952 825,957`),
];
const east: P[] = [
  ...along("315,205 340,178 400,160 460,150 520,168", 5, 80), ...within("315,207 340,180 400,158 470,152 560,172 600,188 650,195 658,222 600,226 540,208 480,190 440,185 400,195 345,212", 170),
  ...along("270,235 300,237 315,222", 5, 16), ...along("655,222 675,235", 4, 10), ...within("460,325 480,315 545,310 575,312 620,330 660,340 678,352 648,360 600,348 560,340 505,350 468,345", 95),
  ...along("313,386 348,408 392,387", 5, 32), ...along("410,315 433,318", 3, 7), ...along("465,222 490,235", 5, 3),
  ...pts(`75,178 27,196 135,170 174,206 149,195 222,213 186,243 87,243 114,243 126,282 213,264 177,297 92,315 140,315 250,218 240,228 152,222 282,235 297,237 261,270
  363,183 408,177 435,156 471,159 495,168 516,180 554,174 578,177 594,204 630,190 645,198 627,219 567,222 605,225 362,224 340,215 324,210 465,224 487,222 491,237 672,235 696,231 461,178
  388,327 390,327 418,315 433,318 461,324 479,317 473,345 513,327 545,309 576,315 537,327 567,339 606,324 545,340 505,357 495,340 663,336 648,360 678,352 313,386 333,395 345,415 375,393 390,388 350,398`),
];
const farEast: P[] = [
  ...within("105,115 125,105 155,98 190,103 215,115 260,112 305,98 345,105 385,125 375,140 350,142 310,152 260,150 230,135 180,132 140,138 105,136", 135),
  ...along("185,280 215,280 224,330", 8, 32), ...along("215,270 240,300 222,325", 4, 14), ...along("150,180 150,230 158,270", 6, 24), ...along("135,173 150,178", 4, 6),
  ...along("750,218 745,250 733,260", 7, 26), ...along("765,230 830,235", 5, 22),
  ...pts(`153,99 132,129 104,138 187,130 168,121 204,117 240,123 258,135 222,140 260,107 290,108 338,109 309,135 336,138 360,142 381,125 402,145 405,146 410,147 428,149 295,152 262,156 267,156 315,108 445,172 463,171 452,192 438,186
  75,201 99,190 108,205 88,216 102,232 117,231 131,172 148,195 150,215 148,238 165,237 153,252 161,273 185,280 194,282 213,265 228,285 242,300 221,309 225,325 285,276 722,253 733,262 753,237 789,234 832,233 827,236 469,429 495,429 540,412`),
];
const Dots = ({ at, x, y }: { at: P[]; x: number; y: number }) => (
  <g transform={`translate(${x} ${y})`} fill="#8f78b0" stroke="#2b2733" strokeWidth="1.100">
    {at.map((p, i) => <circle key={i} cx={(p[0] / 3).toFixed(1)} cy={(p[1] / 3).toFixed(1)} r="3.900" />)}
  </g>
);

/* ---------- status bar fields ---------- */
const Spin = ({ v, w }: { v: string; w: string }) => (
  <div className={`flex h-6 shrink-0 items-stretch overflow-hidden rounded-[3px] border border-[#aeada4] bg-white ${w}`}>
    <span className="flex grow items-center pl-[5px]">{v}</span>
    <div className="flex w-[14px] flex-col items-center justify-center gap-[5px] border-l border-[#c4c3ba] bg-[#f1f0ea]">
      <svg viewBox="0 0 8 5" className="h-[4px] w-[8px]"><path d="M4 0l4 5H0z" fill="#50504c" /></svg>
      <svg viewBox="0 0 8 5" className="h-[4px] w-[8px]"><path d="M4 5l4-5H0z" fill="#50504c" /></svg>
    </div>
  </div>
);
const Check = ({ cls }: { cls: string }) => (
  <svg viewBox="0 0 14 14" className={`shrink-0 ${cls}`}><rect x=".5" y=".5" width="13" height="13" fill="#fff" stroke="#a9a8a0" /><path d="M3.500 6.500l2.700 4L10.500 3" fill="none" stroke="#111" strokeWidth="1.900" /></svg>
);

export default function App() {
  return (
    <div className="flex h-[1005px] w-[1851px] flex-col overflow-hidden bg-[#ebeae3] pt-[2px] font-['Noto_Sans',sans-serif] text-[#111]">
      <div className="h-px shrink-0 bg-[#c9c8bf]" />
      <Bar items="file open save newLayout layouts style :. hand panSel zoomIn zoomOut zoomFull zoomSel zoomLayer zoomNative zoomLast zoomNext newMap new3d newBookmark bookmarks clock refresh : identify table abacus gear sigma measure v tip action -v textNote v" />
      <Bar lead="w-[10px]" items="source geopkg vshape feather memory | virtual | : edits pencil saveEdits addPoints vertex -v modify trash cut copy paste undo redo : abc diagram | abPin abcRed | abg1 abg2 abg3 abg4 abg5 : metasearch :: python : help :" />
      <Bar h="h-[38px]" items="select v selectForm v deselect v selLoc" />
      <div className="flex min-h-0 grow">
        <div className="flex w-[373px] shrink-0 flex-col">
          <DockTitle title="Browser" />
          <div className="flex h-[29px] shrink-0 items-center gap-[9px] pl-[7px] pb-[3px]">
            {["addLayer", "refresh", "funnel", "collapse", "info"].map((n) => <Ico key={n} n={n} cls="size-4" />)}
          </div>
          <div className="h-[418px] shrink-0 border-t border-r border-b border-[#aeada4] bg-white">
            {tree.map(([ic, label, kids]) => (
              <div key={label} className="flex h-[19px] items-center pb-px pl-[7px]">
                <svg viewBox="0 0 5 9" className="h-[9px] w-[5px]">{kids && <path d="M0 0l5 4.500L0 9z" fill="#3c3c3a" />}</svg>
                <Ico n={ic} cls="size-4 ml-[11px] mr-[6px]" />
                <span className="text-[14px] leading-none whitespace-nowrap tracking-[0.25px]">{label}</span>
              </div>
            ))}
          </div>
          <div className="flex h-[5px] shrink-0 items-center justify-center">
            <div className="h-[3px] w-[17px] bg-[radial-gradient(circle,#aaa9a0_0.7px,transparent_0.9px)] bg-[size:3px_3px]" />
          </div>
          <DockTitle title="Layers" />
          <div className="flex h-[29px] shrink-0 items-center gap-[9px] pl-[7px] pb-[3px]">
            {["brush", "group", "eye", "funnel", "epsilon"].map((n) => <Ico key={n} n={n} cls="size-4" />)}
            <svg viewBox="0 0 9 5" className="-ml-[4px] h-[5px] w-[9px]"><path d="M0 0h9L4.500 5z" fill="#3c3c3a" /></svg>
            <div className="-ml-px flex gap-[9px]">{["expand", "collapse", "removeLayer"].map((n) => <Ico key={n} n={n} cls="size-4" />)}</div>
          </div>
          <div className="grow border-t border-r border-[#aeada4] bg-white">
            <div className="flex h-[19px] items-center bg-[#3891c2] pl-[23px]">
              <Check cls="size-[14px]" />
              <svg viewBox="0 0 8 8" className="ml-[10px] size-[8px]"><circle cx="4" cy="4" r="2.800" fill="#6f7eb4" stroke="#3d4f7e" /></svg>
              <span className="ml-[10px] border-b border-white text-[14px] leading-[16px] font-bold tracking-[0.35px] text-white">Trees</span>
            </div>
          </div>
        </div>
        <div className="flex w-[6px] shrink-0 items-center justify-center">
          <div className="h-[17px] w-[3px] bg-[radial-gradient(circle,#aaa9a0_0.7px,transparent_0.9px)] bg-[size:3px_3px]" />
        </div>
        <div className="mt-px min-w-0 grow border-t border-l border-[#aeada4] bg-[#fefefe]">
          <svg viewBox="380 121 1471 853" className="h-[853px] w-[1471px]">
            <Dots at={north} x={899.8} y={169.8} />
            <Dots at={center} x={679.8} y={579.8} />
            <Dots at={east} x={979.8} y={699.8} />
            <Dots at={farEast} x={1249.8} y={739.8} />
            <path d="M908.500 505v15.500l3.500-3 2.500 5.500 2.500-1.200-2.500-5.300h5z" fill="#fff" stroke="#111" strokeWidth="1.100" />
          </svg>
        </div>
      </div>
      <div className="flex h-[31px] shrink-0 items-center border-t border-[#aeada4] pl-[3px] text-[12px]">
        <div className="flex h-[25px] w-[268px] shrink-0 items-center rounded-[3px] border border-[#aeada4] bg-white pb-px pl-[8px]">
          <svg viewBox="0 0 14 14" className="size-[13px]"><circle cx="6" cy="5.500" r="4" fill="none" stroke="#77776f" strokeWidth="1.100" /><path d="M8.800 8.300l3.700 4" stroke="#77776f" strokeWidth="1.500" /></svg>
          <span className="ml-[7px] text-[14px] tracking-[-0.05px] text-[#8a8a86]">Type to locate (Ctrl+K)</span>
        </div>
        <span className="ml-[695px] w-[60px] shrink-0 whitespace-nowrap tracking-[-0.2px]">Coordinate</span>
        <div className="ml-[4px] flex h-[23px] w-[110px] shrink-0 items-center justify-center rounded-[3px] border border-[#aeada4] bg-white">684989,5626706</div>
        <Ico n="extents" cls="size-[16px] ml-[4px]" />
        <span className="ml-[13px] w-[32px] shrink-0">Scale</span>
        <div className="flex h-[24px] w-[97px] shrink-0 items-stretch rounded-[3px] border border-[#aeada4] bg-white">
          <span className="flex grow items-center pl-[4px]">1:136494</span>
          <div className="flex w-[20px] items-center justify-center border-l border-[#c4c3ba] bg-[#f4f3ee]">
            <svg viewBox="0 0 8 5" className="h-[5px] w-[8px]"><path d="M4 5l4-5H0z" fill="#50504c" /></svg>
          </div>
        </div>
        <Ico n="lock" cls="size-4 ml-[10px]" />
        <span className="ml-[7px] w-[56px] shrink-0 whitespace-nowrap tracking-[-0.2px]">Magnifier</span>
        <Spin v="100%" w="w-[98px]" />
        <span className="ml-[9px] w-[57px] shrink-0">Rotation</span>
        <Spin v="0.0 °" w="w-[94px]" />
        <Check cls="size-[14px] ml-[6px]" />
        <span className="ml-[5px] w-[57px] shrink-0">Render</span>
        <Ico n="crs" cls="size-4" />
        <span className="ml-[4px] w-[77px] shrink-0 whitespace-nowrap">EPSG:3157</span>
        <Ico n="bubble" cls="size-4" />
      </div>
    </div>
  );
}
